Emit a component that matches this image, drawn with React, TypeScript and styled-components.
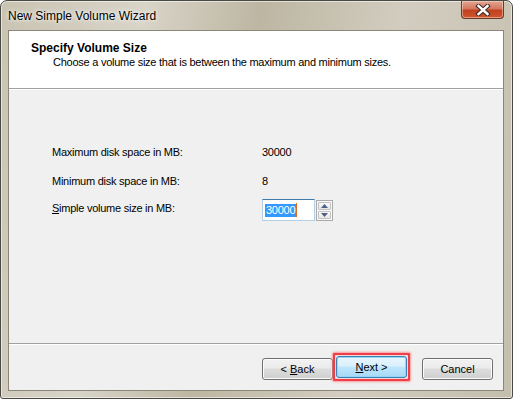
import { styled, createGlobalStyle } from 'styled-components';

const GlobalStyle = createGlobalStyle`
    html, body {
        margin: 0;
        padding: 0;
        background: #ffffff;
    }
    body {
        font-family: 'Liberation Sans', Arial, sans-serif;
        font-size: 11px;
        color: #000000;
    }
`;

export default function App() {
    return (
        <>
            <GlobalStyle />
            <Window>
                <TitleBar>
                    <Title>New Simple Volume Wizard</Title>
                    <CloseButton>
                        <svg width="18" height="12" viewBox="0 0 18 12">
                            <path
                                d="M4.5 2 L13.5 10 M13.5 2 L4.5 10"
                                stroke="#3c2a26"
                                strokeWidth="4.4"
                                strokeLinecap="square"
                                fill="none"
                            />
                            <path
                                d="M4.5 2 L13.5 10 M13.5 2 L4.5 10"
                                stroke="#ffffff"
                                strokeWidth="2.4"
                                strokeLinecap="square"
                                fill="none"
                            />
                        </svg>
                    </CloseButton>
                </TitleBar>
                <Client>
                    <Header>
                        <HeaderTitle>Specify Volume Size</HeaderTitle>
                        <HeaderText>Choose a volume size that is between the maximum and minimum sizes.</HeaderText>
                    </Header>
                    <Body>
                        <Form>
                            <Label>Maximum disk space in MB:</Label>
                            <Value>30000</Value>
                            <Label>Minimum disk space in MB:</Label>
                            <Value>8</Value>
                            <Label $raise>
                                <u>S</u>imple volume size in MB:
                            </Label>
                            <SpinBox>
                                <SizeInput>
                                    <Selected>30000</Selected>
                                    <Caret />
                                </SizeInput>
                                <Spinner>
                                    <SpinButton>
                                        <svg width="7" height="4" viewBox="0 0 7 4">
                                            <path d="M0 4 L3.5 0 L7 4 Z" fill="#4d6185" />
                                        </svg>
                                    </SpinButton>
                                    <SpinButton>
                                        <svg width="7" height="4" viewBox="0 0 7 4">
                                            <path d="M0 0 L3.5 4 L7 0 Z" fill="#4d6185" />
                                        </svg>
                                    </SpinButton>
                                </Spinner>
                            </SpinBox>
                        </Form>
                    </Body>
                    <Footer>
                        <Button>
                            <span>
                                &lt; <u>B</u>ack
                            </span>
                        </Button>
                        <Highlight>
                            <Button $primary>
                                <span>
                                    <u>N</u>ext &gt;
                                </span>
                            </Button>
                        </Highlight>
                        <Button $spaced>Cancel</Button>
                    </Footer>
                </Client>
            </Window>
        </>
    );
}

const Window = styled.div`
    width: 513px;
    height: 399px;
    box-sizing: border-box;
    display: flex;
    flex-direction: column;
    border: 1px solid #4a4a44;
    border-radius: 7px 7px 3px 3px;
    background: linear-gradient(100deg, #c9c3b2 0%, #d8d4c8 25%, #bdb6a2 45%, #d2cdc0 70%, #c4bead 100%);
    box-shadow: inset 0 0 0 1px rgba(255, 255, 255, 0.55);
    overflow: hidden;
`;

const TitleBar = styled.div`
    height: 29px;
    display: flex;
    align-items: flex-start;
    padding-left: 7px;
    padding-right: 8px;
`;

const Title = styled.div`
    font-family: 'Liberation Sans', Arial, sans-serif;
    font-size: 12px;
    line-height: 14px;
    margin-top: 8px;
    color: #000000;
    text-shadow: 0 0 6px rgba(255, 255, 255, 0.9), 0 0 3px rgba(255, 255, 255, 0.9);
`;

const CloseButton = styled.div`
    margin-left: auto;
    width: 43px;
    height: 18px;
    box-sizing: border-box;
    display: flex;
    align-items: center;
    justify-content: center;
    border: 1px solid #6b3a2e;
    border-top: none;
    border-radius: 0 0 4px 4px;
    background: linear-gradient(#e3a694 0%, #d4785e 45%, #c0401f 55%, #d0582f 100%);
    box-shadow: inset 0 0 0 1px rgba(255, 230, 220, 0.45);
`;

const Client = styled.div`
    flex: 1;
    display: flex;
    flex-direction: column;
    margin: 0 8px 7px 7px;
    border: 1px solid #8a8678;
    background: #f0f0f0;
    letter-spacing: -0.25px;
`;

const Header = styled.div`
    height: 58px;
    box-sizing: border-box;
    padding: 10px 0 0 22px;
    background: #ffffff;
    border-bottom: 1px solid #a0a0a0;
    box-shadow: 0 1px 0 #ffffff;
`;

const HeaderTitle = styled.div`
    font-weight: bold;
    font-size: 12px;
    line-height: 14px;
    letter-spacing: 0;
`;

const HeaderText = styled.div`
    font-size: 11px;
    line-height: 14px;
    padding-left: 22px;
`;

const Body = styled.div`
    flex: 1;
    padding: 52px 0 0 43px;
    border-bottom: 1px solid #a0a0a0;
    box-shadow: 0 1px 0 #ffffff;
`;

const Form = styled.div`
    display: grid;
    grid-template-columns: 210px auto;
    grid-auto-rows: 22px;
    row-gap: 7px;
    align-items: center;
`;

const Label = styled.div<{ $raise?: boolean }>`
    line-height: 14px;
    margin-bottom: ${(p) => (p.$raise ? '5px' : '0')};
`;

const Value = styled.div`
    line-height: 14px;
`;

const SpinBox = styled.div`
    display: flex;
    align-items: center;
    gap: 1px;
    height: 22px;
`;

const SizeInput = styled.div`
    width: 53px;
    height: 22px;
    box-sizing: border-box;
    display: flex;
    align-items: center;
    padding-left: 2px;
    background: #ffffff;
    border: 1px solid #b5cfe7;
    border-top-color: #3d7bad;
`;

const Selected = styled.span`
    background: #3399ff;
    color: #ffffff;
    line-height: 13px;
    padding: 0 1px;
`;

const Caret = styled.span`
    width: 1px;
    height: 14px;
    background: #e06a1c;
`;

const Spinner = styled.div`
    display: flex;
    flex-direction: column;
    gap: 1px;
    width: 17px;
    height: 21px;
    box-sizing: border-box;
    padding: 1px;
    border: 1px solid #aaaaaa;
    background: #f7f7f7;
`;

const SpinButton = styled.div`
    flex: 1;
    display: flex;
    align-items: center;
    justify-content: center;
    border: 1px solid #c3c3c3;
    border-radius: 1px;
    background: linear-gradient(#fafafa, #e6e6e6);
`;

const Footer = styled.div`
    height: 46px;
    box-sizing: border-box;
    display: flex;
    justify-content: flex-end;
    align-items: flex-start;
    padding: 9px 10px 0 0;
`;

const Highlight = styled.div`
    padding: 1px;
    border: 2px solid #ef3e47;
    box-shadow: 0 0 2px 1px rgba(255, 120, 120, 0.7), inset 0 0 2px rgba(255, 120, 120, 0.7);
    border-radius: 1px;
`;

const Button = styled.div<{ $primary?: boolean; $spaced?: boolean }>`
    width: 71px;
    height: 22px;
    box-sizing: border-box;
    display: flex;
    align-items: center;
    justify-content: center;
    margin-top: ${(p) => (p.$primary ? '0' : '5px')};
    margin-left: ${(p) => (p.$spaced ? '12px' : '0')};
    border: 1px solid ${(p) => (p.$primary ? '#3c7fb1' : '#707070')};
    border-radius: 3px;
    font-size: 11px;
    letter-spacing: 0;
    background: ${(p) =>
        p.$primary
            ? 'linear-gradient(#eaf6fd 0%, #d9f0fc 45%, #bee6fd 50%, #a7d9f5 100%)'
            : 'linear-gradient(#f2f2f2 0%, #ebebeb 45%, #dddddd 50%, #cfcfcf 100%)'};
    box-shadow: inset 0 0 0 1px ${(p) => (p.$primary ? '#94d6f7' : '#fcfcfc')};
`;
